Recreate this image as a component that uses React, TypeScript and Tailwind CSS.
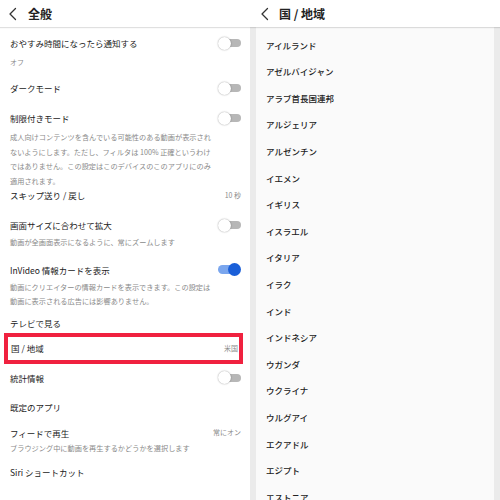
import React from "react";

const font = { fontFamily: '"Noto Sans CJK JP", "Noto Sans", sans-serif' };

function Chevron() {
  return (
    <svg width="10" height="14" viewBox="0 0 10 14" fill="none" stroke="#333" strokeWidth="1.3" strokeLinecap="round" strokeLinejoin="round">
      <polyline points="7.5,1.5 2,7 7.5,12.5" />
    </svg>
  );
}

function Toggle({ on = false }: { on?: boolean }) {
  if (on) {
    return (
      <div className="relative h-[13px] w-[23px]">
        <div className="absolute left-0 top-[2px] h-[9px] w-[20px] rounded-full bg-[#7aa6ee]" />
        <div className="absolute right-0 top-0 h-[13px] w-[13px] rounded-full bg-[#1a5fd8]" />
      </div>
    );
  }
  return (
    <div className="relative h-[13px] w-[23px]">
      <div className="absolute right-0 top-[2.5px] h-[8px] w-[18px] rounded-full bg-[#b7b7b7]" />
      <div className="absolute left-0 top-0 h-[13px] w-[13px] rounded-full bg-white shadow-[0_0_1.5px_rgba(0,0,0,0.45)]" />
    </div>
  );
}

function Title({ children, right }: { children: React.ReactNode; right?: React.ReactNode }) {
  return (
    <div className="flex h-[14px] items-center justify-between pr-[9px]">
      <span className="text-[8.5px] leading-[14px] text-[#222]">{children}</span>
      {right}
    </div>
  );
}

function Desc({ children, className = "" }: { children: React.ReactNode; className?: string }) {
  return <p className={`w-[205px] text-[7.2px] leading-[14.5px] text-[#8a8a8a] ${className}`}>{children}</p>;
}

const Value = ({ t }: { t: string }) => <span className="text-[7px] text-[#8a8a8a]">{t}</span>;

const countries = [
  "アイルランド",
  "アゼルバイジャン",
  "アラブ首長国連邦",
  "アルジェリア",
  "アルゼンチン",
  "イエメン",
  "イギリス",
  "イスラエル",
  "イタリア",
  "イラク",
  "インド",
  "インドネシア",
  "ウガンダ",
  "ウクライナ",
  "ウルグアイ",
  "エクアドル",
  "エジプト",
  "エストニア",
];

export default function App() {
  return (
    <div className="flex h-[500px] w-[500px] flex-col overflow-hidden bg-white" style={font}>
      <header className="relative z-10 flex h-[27px] shrink-0 bg-white shadow-[0_1px_1px_rgba(0,0,0,0.12)]">
        <div className="flex w-[250px] items-center gap-[10px] pl-[8px]">
          <Chevron />
          <span className="text-[12px] font-bold text-[#222]">全般</span>
        </div>
        <div className="flex w-[250px] items-center gap-[9px] pl-[10px]">
          <Chevron />
          <span className="text-[12px] font-bold text-[#222]">国 / 地域</span>
        </div>
      </header>

      <div className="flex min-h-0 flex-1">
        <div className="w-[250px] shrink-0 pl-[10px]">
          <div className="pt-[9px]">
            <Title right={<Toggle />}>おやすみ時間になったら通知する</Title>
            <p className="mt-[6px] text-[7px] leading-[12px] text-[#8a8a8a]">オフ</p>
          </div>
          <div className="pt-[13px]">
            <Title right={<Toggle />}>ダークモード</Title>
          </div>
          <div className="pt-[16px]">
            <Title right={<Toggle />}>制限付きモード</Title>
            <Desc className="mt-[5px]">
              成人向けコンテンツを含んでいる可能性のある動画が表示されないようにします。ただし、フィルタは 100% 正確というわけではありません。この設定はこのデバイスのこのアプリにのみ適用されます。
            </Desc>
          </div>
          <div className="pt-0">
            <Title right={<Value t="10 秒" />}>スキップ送り / 戻し</Title>
          </div>
          <div className="pt-[16px]">
            <Title right={<Toggle />}>画面サイズに合わせて拡大</Title>
            <Desc className="mt-[3px]">動画が全画面表示になるように、常にズームします</Desc>
          </div>
          <div className="pt-[13px]">
            <Title right={<Toggle on />}>InVideo 情報カードを表示</Title>
            <Desc className="mt-[3px]">
              動画にクリエイターの情報カードを表示できます。この設定は動画に表示される広告には影響ありません。
            </Desc>
          </div>
          <div className="pt-[7px]">
            <Title>テレビで見る</Title>
          </div>
          <div className="-ml-[6px] mt-[3px] mr-[7px] flex h-[31px] items-center justify-between border-[4px] border-[#f0213f] pl-[3px] pr-[1px]">
            <span className="text-[8.5px] text-[#222]">国 / 地域</span>
            <Value t="米国" />
          </div>
          <div className="pt-[7px]">
            <Title right={<Toggle />}>統計情報</Title>
          </div>
          <div className="pt-[15px]">
            <Title>既定のアプリ</Title>
          </div>
          <div className="pt-[12px]">
            <Title right={<Value t="常にオン" />}>フィードで再生</Title>
            <Desc className="mt-[1px]">ブラウジング中に動画を再生するかどうかを選択します</Desc>
          </div>
          <div className="pt-[10px]">
            <Title>Siri ショートカット</Title>
          </div>
        </div>

        <div className="flex w-[250px] shrink-0 bg-[#ebebeb] px-[6px]">
          <ul className="flex-1 bg-[#fafafa] pl-[10px] pt-[4.7px]">
            {countries.map((c) => (
              <li key={c} className="flex h-[26.6px] items-center text-[8.5px] font-medium text-[#222]">
                {c}
              </li>
            ))}
          </ul>
        </div>
      </div>
    </div>
  );
}
